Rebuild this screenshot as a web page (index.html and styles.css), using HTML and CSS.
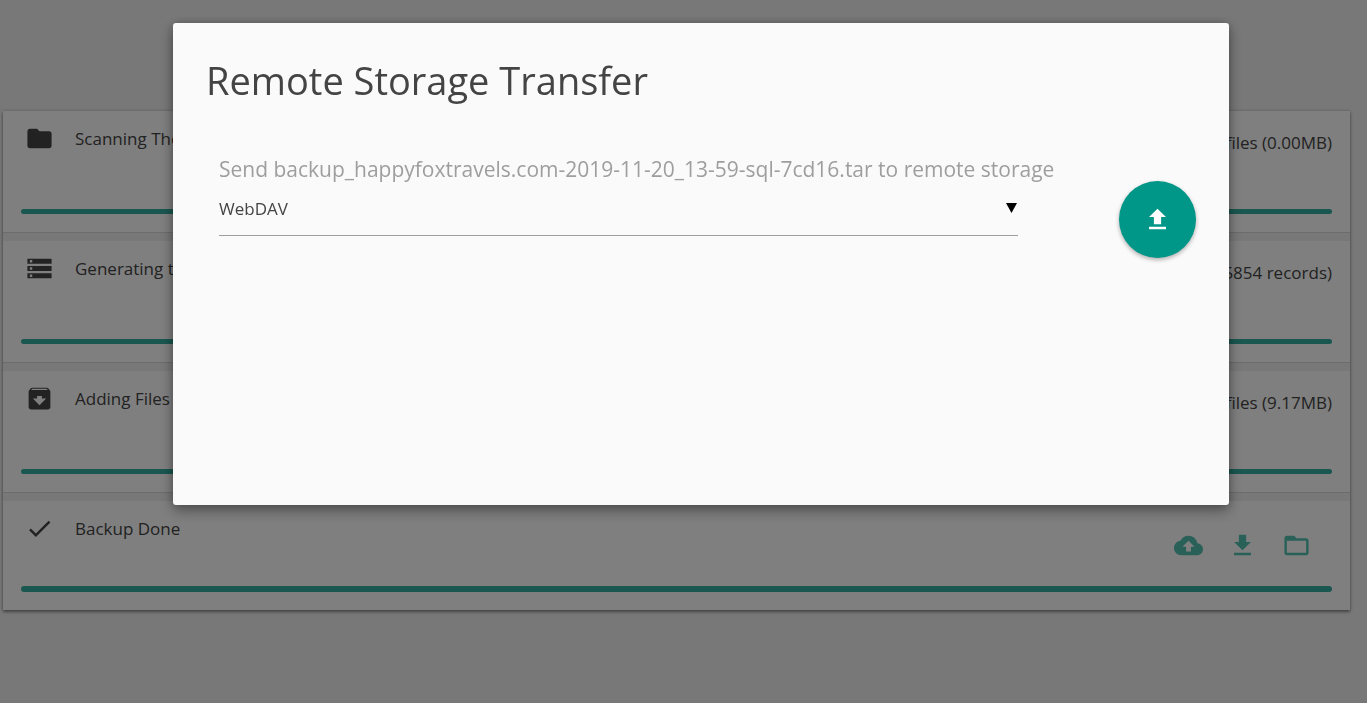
FILE: index.html
```html
<!DOCTYPE html>
<html lang="en">

<head>
    <meta charset="UTF-8">
    <meta name="viewport" content="width=device-width, initial-scale=1.0">
    <title>Remote Storage Transfer</title>
    <link rel="stylesheet" href="styles.css">
</head>

<body>

    <ul class="steps">
        <li class="step">
            <div class="step-head">
                <svg class="icon" viewBox="0 0 24 24"><path d="M10 4H4c-1.100 0-1.990.9-1.990 2L2 18c0 1.100.9 2 2 2h16c1.100 0 2-.9 2-2V8c0-1.100-.9-2-2-2h-8l-2-2z"/></svg>
                <span class="step-name">Scanning The</span>
                <span class="step-info">files (0.00MB)</span>
            </div>
            <div class="progress"></div>
        </li>
        <li class="step">
            <div class="step-head">
                <svg class="icon" viewBox="0 0 24 24"><path d="M2 20h20v-4H2v4zm2-3h2v2H4v-2zM2 4v4h20V4H2zm4 3H4V5h2v2zm-4 7h20v-4H2v4zm2-3h2v2H4v-2z"/></svg>
                <span class="step-name">Generating the</span>
                <span class="step-info">5854 records)</span>
            </div>
            <div class="progress"></div>
        </li>
        <li class="step">
            <div class="step-head">
                <svg class="icon" viewBox="0 0 24 24"><path d="M20.540 5.230l-1.390-1.680C18.880 3.210 18.470 3 18 3H6c-.47 0-.88.21-1.160.55L3.460 5.230C3.170 5.570 3 6.020 3 6.500V19c0 1.100.9 2 2 2h14c1.100 0 2-.9 2-2V6.500c0-.48-.17-.93-.46-1.270zM12 17.500L6.500 12H10v-2h4v2h3.500L12 17.500zM5.120 5l.81-1h12l.94 1H5.120z"/></svg>
                <span class="step-name">Adding Files</span>
                <span class="step-info">files (9.17MB)</span>
            </div>
            <div class="progress"></div>
        </li>
        <li class="step step-done">
            <div class="step-head">
                <svg class="icon" viewBox="0 0 24 24"><path d="M9 16.170L4.830 12l-1.420 1.410L9 19 21 7l-1.410-1.410z"/></svg>
                <span class="step-name">Backup Done</span>
                <div class="actions">
                    <button type="button" aria-label="Send to remote storage">
                        <svg class="icon" viewBox="0 0 24 24"><path d="M19.350 10.040C18.670 6.590 15.640 4 12 4 9.110 4 6.600 5.640 5.350 8.040 2.340 8.360 0 10.910 0 14c0 3.310 2.690 6 6 6h13c2.760 0 5-2.240 5-5 0-2.640-2.050-4.780-4.650-4.960zM14 13v4h-4v-4H7l5-5 5 5h-3z"/></svg>
                    </button>
                    <button type="button" aria-label="Download">
                        <svg class="icon" viewBox="0 0 24 24"><path d="M19 9h-4V3H9v6H5l7 7 7-7zM5 18v2h14v-2H5z"/></svg>
                    </button>
                    <button type="button" aria-label="Open folder">
                        <svg class="icon" viewBox="0 0 24 24"><path d="M20 6h-8l-2-2H4c-1.100 0-1.990.9-1.990 2L2 18c0 1.100.9 2 2 2h16c1.100 0 2-.9 2-2V8c0-1.100-.9-2-2-2zm0 12H4V8h16v10z"/></svg>
                    </button>
                </div>
            </div>
            <div class="progress"></div>
        </li>
    </ul>

    <div class="overlay">
        <div class="modal" role="dialog" aria-labelledby="modal-title">
            <h1 id="modal-title">Remote Storage Transfer</h1>
            <form class="transfer">
                <div class="field">
                    <label for="storage">Send backup_happyfoxtravels.com-2019-11-20_13-59-sql-7cd16.tar to remote storage</label>
                    <div class="select-wrap">
                        <select id="storage">
                            <option>WebDAV</option>
                        </select>
                        <svg class="caret" viewBox="0 0 11 10"><path d="M0 0h11L5.500 10z"/></svg>
                    </div>
                </div>
                <button class="fab" type="button" aria-label="Upload">
                    <svg class="icon" viewBox="0 0 24 24"><path d="M9 16h6v-6h4l-7-7-7 7h4zm-4 2h14v2H5z"/></svg>
                </button>
            </form>
        </div>
    </div>

</body>

</html>
```
FILE: styles.css
```css
* {
    box-sizing: border-box;
    margin: 0;
    padding: 0;
}

body {
    min-height: 100vh;
    padding: 111px 17px 0 3px;
    background: #f0f0f0;
    color: #444;
    font-family: "Segoe UI", "Open Sans", "Noto Sans", sans-serif;
    font-size: 17px;
    font-weight: 400;
    line-height: 26px;
}

button {
    border: none;
    background: none;
    cursor: pointer;
}

.icon {
    display: block;
    flex: none;
    width: 29px;
    height: 29px;
    fill: currentColor;
}

/* backup steps */
.steps {
    list-style: none;
    background: #f0f0f0;
    box-shadow: 0 2px 3px rgba(0, 0, 0, 0.4), 0 0 3px rgba(0, 0, 0, 0.2);
}

.step {
    margin-bottom: 8px;
    padding: 13px 18px 18px;
    background: #fff;
    border-bottom: 1px solid #d8d8d8;
}

.step-head {
    display: flex;
    align-items: flex-start;
    height: 85px;
    padding-left: 4px;
}

.step-name {
    margin-left: 21px;
    padding-top: 2px;
}

.step-info {
    margin-left: auto;
    padding-top: 6px;
}

.progress {
    height: 5px;
    border-radius: 3px;
    background: #35aea0;
}

.step-done {
    margin-bottom: 0;
    border-bottom: none;
}

.step-done .step-head {
    height: 72px;
}

.step-done .progress {
    height: 6px;
}

.actions {
    display: flex;
    gap: 25px;
    margin-left: auto;
    padding: 17px 21px 0 0;
}

.actions button {
    color: #52c0b0;
}

/* modal */
.overlay {
    position: fixed;
    inset: 0;
    padding: 23px 138px 0 173px;
    background: rgba(0, 0, 0, 0.5);
}

.modal {
    min-height: 482px;
    padding: 29px 33px;
    background: #fafafa;
    border-radius: 3px;
    box-shadow: 0 6px 14px rgba(0, 0, 0, 0.35), 0 0 10px rgba(0, 0, 0, 0.2);
}

.modal h1 {
    color: #444;
    font-size: 38px;
    font-weight: 400;
    line-height: 56px;
}

.transfer {
    display: flex;
    align-items: flex-start;
    margin-top: 47px;
    padding-left: 13px;
}

.field {
    flex: 1;
    min-width: 0;
    padding-right: 101px;
}

.field label {
    display: block;
    color: #9e9e9e;
    font-size: 21px;
    line-height: 28px;
    white-space: nowrap;
}

.select-wrap {
    position: relative;
}

.select-wrap select {
    display: block;
    width: 100%;
    height: 53px;
    border: none;
    border-bottom: 1px solid #9e9e9e;
    background: none;
    appearance: none;
    color: #444;
    font: inherit;
    outline: none;
}

.caret {
    position: absolute;
    top: 20px;
    right: 1px;
    width: 11px;
    height: 10px;
    pointer-events: none;
}

.fab {
    display: flex;
    align-items: center;
    justify-content: center;
    width: 77px;
    height: 77px;
    margin-top: 26px;
    border-radius: 50%;
    background: #009688;
    color: #fff;
    box-shadow: 0 2px 4px rgba(0, 0, 0, 0.3);
}
```
